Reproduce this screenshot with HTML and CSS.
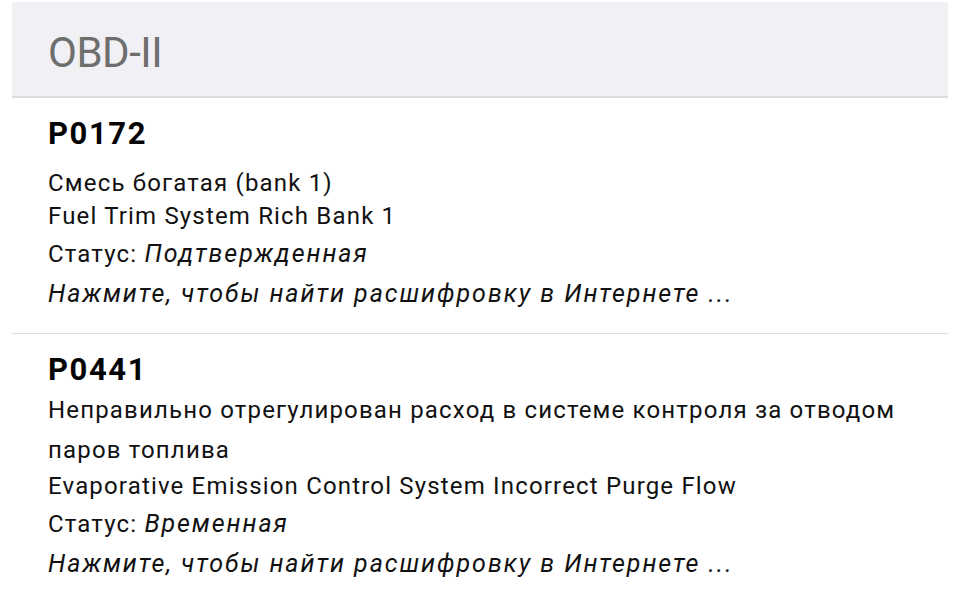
FILE: index.html
```html
<!DOCTYPE html>
<html lang="ru">
<head>
<meta charset="utf-8">
<title>OBD-II</title>
<link rel="stylesheet" href="styles.css">
</head>
<body>
<div class="page">
  <header class="section-header">OBD-II</header>
  <ul class="codes">
    <li class="code code--first">
      <div class="code-id">P0172</div>
      <div class="desc-ru">Смесь богатая (bank 1)</div>
      <div class="desc-en">Fuel Trim System Rich Bank 1</div>
      <div class="status">Статус: <em>Подтвержденная</em></div>
      <div class="lookup"><em>Нажмите, чтобы найти расшифровку в Интернете ...</em></div>
    </li>
    <li class="code">
      <div class="code-id">P0441</div>
      <div class="desc-ru">Неправильно отрегулирован расход в системе контроля за отводом паров топлива</div>
      <div class="desc-en">Evaporative Emission Control System Incorrect Purge Flow</div>
      <div class="status">Статус: <em>Временная</em></div>
      <div class="lookup"><em>Нажмите, чтобы найти расшифровку в Интернете ...</em></div>
    </li>
  </ul>
</div>
</body>
</html>
```

FILE: styles.css
```css
* { box-sizing: border-box; }

html, body {
  margin: 0;
  padding: 0;
  background: #ffffff;
}

body {
  font-family: Roboto, "Noto Sans", sans-serif;
  color: #111111;
}

.page {
  padding: 2px 12px 0;
}

.section-header {
  background: #f1f0f5;
  border-bottom: 2px solid #dcdce0;
  color: #6e6e6e;
  font-size: 42px;
  letter-spacing: -0.5px;
  line-height: 80px;
  padding: 11px 36px 3px;
}

.codes {
  list-style: none;
  margin: 0;
  padding: 0;
}

.code {
  padding: 16px 36px 23px;
  border-bottom: 1px solid #dedede;
  font-size: 24px;
  letter-spacing: 1.17px;
}

.code:last-child {
  border-bottom: none;
}

.code-id {
  font-size: 31px;
  font-weight: 700;
  letter-spacing: 1.6px;
  line-height: 40px;
  color: #050505;
}

.desc-ru {
  line-height: 40px;
}

.code--first .desc-ru {
  line-height: 34px;
  margin-top: 12px;
}

.desc-en {
  line-height: 32px;
}

.status {
  line-height: 32px;
  margin-top: 6px;
}

.lookup {
  line-height: 32px;
  margin-top: 8px;
}

em {
  font-style: italic;
  font-size: 25px;
  letter-spacing: 1.95px;
}
```
